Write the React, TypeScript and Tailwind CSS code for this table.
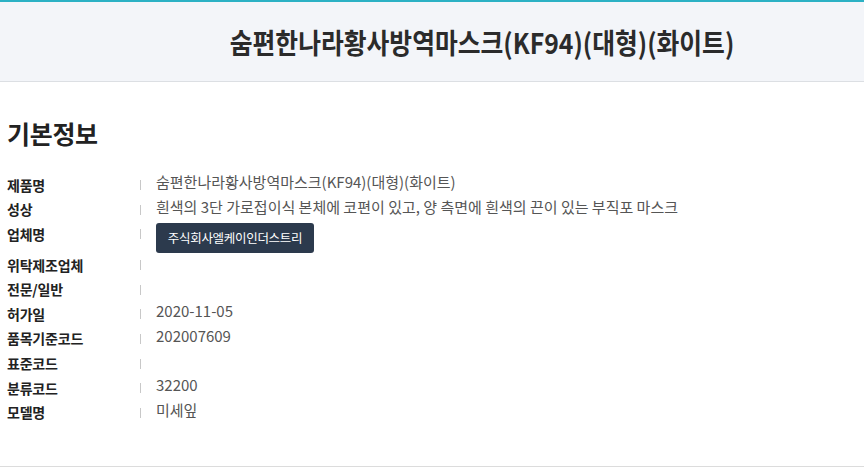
const rows: { label: string; value?: string; button?: boolean }[] = [
  { label: "제품명", value: "숨편한나라황사방역마스크(KF94)(대형)(화이트)" },
  { label: "성상", value: "흰색의 3단 가로접이식 본체에 코편이 있고, 양 측면에 흰색의 끈이 있는 부직포 마스크" },
  { label: "업체명", value: "주식회사엘케이인더스트리", button: true },
  { label: "위탁제조업체" },
  { label: "전문/일반" },
  { label: "허가일", value: "2020-11-05" },
  { label: "품목기준코드", value: "202007609" },
  { label: "표준코드" },
  { label: "분류코드", value: "32200" },
  { label: "모델명", value: "미세잎" },
];

export default function App() {
  return (
    <div
      className="h-[468px] w-[864px] overflow-hidden bg-white"
      style={{ fontFamily: '"Noto Sans CJK KR", "Noto Sans", sans-serif' }}
    >
      <header className="border-t-2 border-b border-t-[#2bb1c4] border-b-[#dcdfe3] bg-[#f3f5f9]">
        <div className="flex h-[79px] items-center justify-center pl-[100px]">
          <h1 className="shrink-0 scale-x-[0.885] whitespace-nowrap text-[28px] font-bold text-[#2b2b2b]">
            숨편한나라황사방역마스크(KF94)(대형)(화이트)
          </h1>
        </div>
      </header>

      <section className="h-[385px] border-b border-[#dcdcdc] px-[7px]">
        <h2 className="pt-[33px] text-[25px] font-bold leading-[36px] tracking-[-0.3px] text-[#222]">
          기본정보
        </h2>
        <dl className="mt-[22px] flex flex-col">
          {rows.map((r) => (
            <div
              key={r.label}
              className={`flex ${r.button ? "h-[31px]" : "h-[24.6px]"}`}
            >
              <dt className="flex h-[24px] w-[133px] shrink-0 items-center text-[14px] font-bold tracking-[-0.2px] text-[#222]">
                {r.label}
              </dt>
              <dd className="flex flex-1 items-start">
                <span className="mt-[7px] mr-[15px] h-[10px] w-px shrink-0 bg-[#c8c8c8]" />
                {r.button ? (
                  <span className="mt-[1px] flex h-[30px] w-[158px] items-center justify-center rounded-[3px] bg-[#2c3a4d] text-[12.5px] tracking-[-0.3px] text-white">
                    {r.value}
                  </span>
                ) : (
                  <span className="-mt-[2px] text-[15px] leading-[22px] text-[#555]">
                    {r.value}
                  </span>
                )}
              </dd>
            </div>
          ))}
        </dl>
      </section>
    </div>
  );
}
